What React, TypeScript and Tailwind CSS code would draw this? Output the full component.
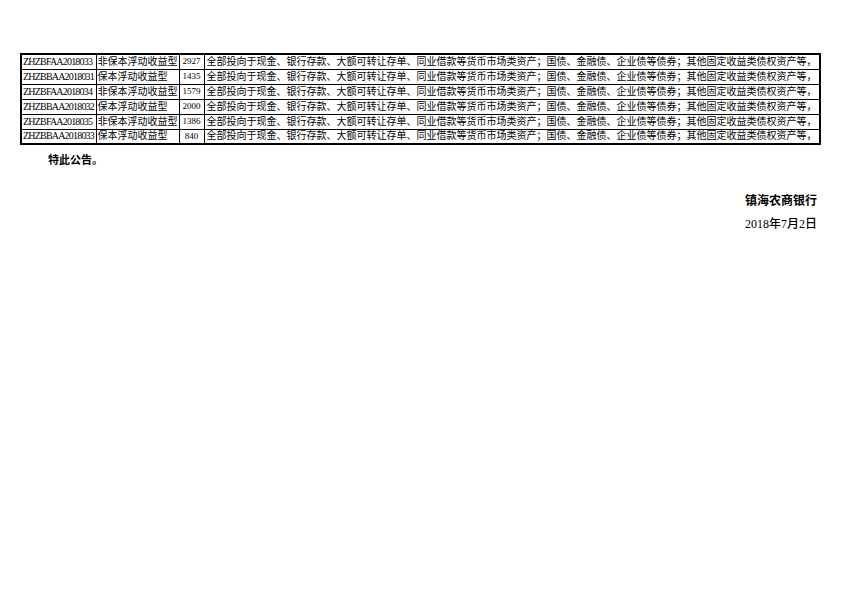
const rows = [
  { code: "ZHZBFAA2018033", type: "非保本浮动收益型", amount: "2927" },
  { code: "ZHZBBAA2018031", type: "保本浮动收益型", amount: "1435" },
  { code: "ZHZBFAA2018034", type: "非保本浮动收益型", amount: "1579" },
  { code: "ZHZBBAA2018032", type: "保本浮动收益型", amount: "2000" },
  { code: "ZHZBFAA2018035", type: "非保本浮动收益型", amount: "1386" },
  { code: "ZHZBBAA2018033", type: "保本浮动收益型", amount: "840" },
];

const scope =
  "全部投向于现金、银行存款、大额可转让存单、同业借款等货币市场类资产；国债、金融债、企业债等债券；其他固定收益类债权资产等，";

const App = () => {
  return (
    <div className="w-[842px] h-[595px] bg-white text-black font-['Liberation_Serif','Noto_Sans_CJK_SC',serif]">
      <div className="pt-[53px] pl-[20px]">
        <table className="w-[801px] table-fixed border-collapse border-2 border-black text-[10px] leading-none">
          <colgroup>
            <col className="w-[75px]" />
            <col className="w-[83px]" />
            <col className="w-[25px]" />
            <col />
          </colgroup>
          <tbody>
            {rows.map((r, i) => (
              <tr key={i} className="h-[15px]">
                <td className="border border-black pl-[1px] text-[10px] tracking-[-0.8px] whitespace-nowrap overflow-hidden">{r.code}</td>
                <td className="border border-black pl-[1px] whitespace-nowrap overflow-hidden">{r.type}</td>
                <td className="border border-black text-center text-[9px]">{r.amount}</td>
                <td className="border border-black pl-[2px] whitespace-nowrap overflow-hidden">{scope}</td>
              </tr>
            ))}
          </tbody>
        </table>
      </div>

      <p className="mt-[7px] pl-[48px] text-[11px] leading-[14px] font-bold font-['Noto_Sans_CJK_SC',sans-serif]">
        特此公告。
      </p>

      <div className="mt-[27px] pr-[25px] flex flex-col items-end gap-[10px]">
        <p className="text-[12px] leading-[14px] font-bold font-['Noto_Sans_CJK_SC',sans-serif]">镇海农商银行</p>
        <p className="text-[12px] leading-[14px] font-medium">2018年7月2日</p>
      </div>
    </div>
  );
};

export default App;
